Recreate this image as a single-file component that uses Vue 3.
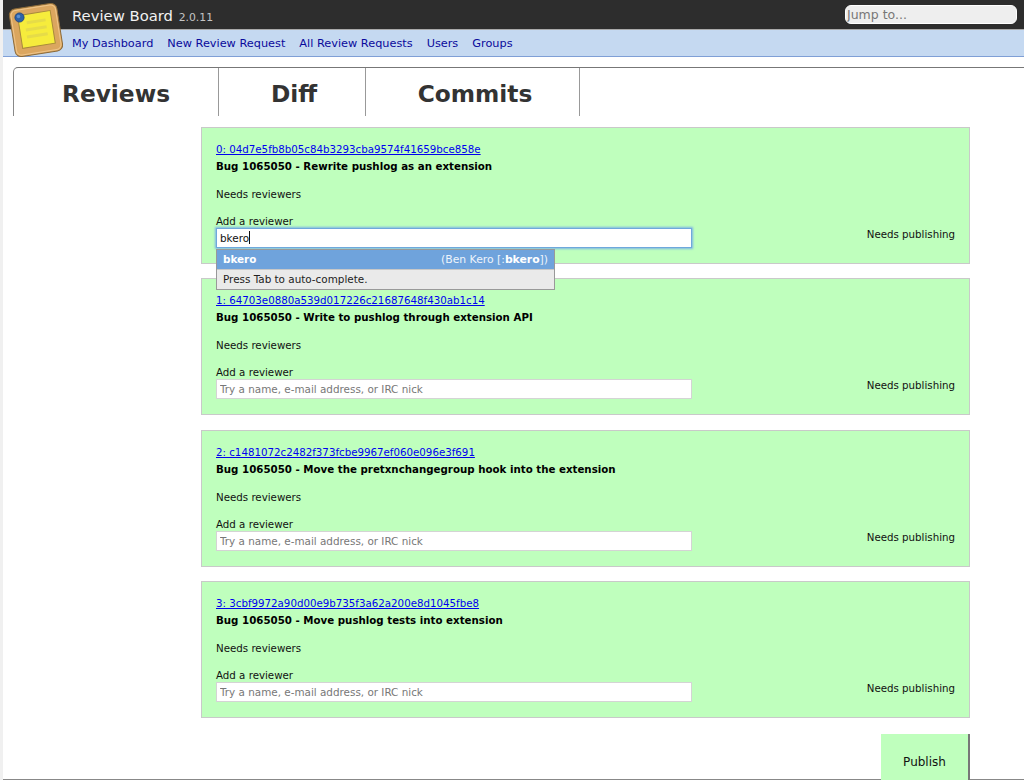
<script setup>
const commits = [
  { id: 0, hash: '04d7e5fb8b05c84b3293cba9574f41659bce858e', title: 'Bug 1065050 - Rewrite pushlog as an extension', active: true },
  { id: 1, hash: '64703e0880a539d017226c21687648f430ab1c14', title: 'Bug 1065050 - Write to pushlog through extension API' },
  { id: 2, hash: 'c1481072c2482f373fcbe9967ef060e096e3f691', title: 'Bug 1065050 - Move the pretxnchangegroup hook into the extension' },
  { id: 3, hash: '3cbf9972a90d00e9b735f3a62a200e8d1045fbe8', title: 'Bug 1065050 - Move pushlog tests into extension' }
]
const navLinks = ['My Dashboard', 'New Review Request', 'All Review Requests', 'Users', 'Groups']
const tabs = [
  { label: 'Reviews', cls: 'tab-reviews' },
  { label: 'Diff', cls: 'tab-diff' },
  { label: 'Commits', cls: 'tab-commits' }
]
</script>

<template>
  <div class="page">
    <header class="topbar">
      <div class="brand">Review Board <span class="version">2.0.11</span></div>
      <input class="jump" placeholder="Jump to..." />
    </header>
    <nav class="navbar">
      <a v-for="l in navLinks" :key="l" href="#" class="navlink">{{ l }}</a>
    </nav>
    <svg class="logo" width="58" height="58" viewBox="0 0 58 58">
      <g transform="rotate(-9 29 29)">
        <rect x="5" y="5" width="48" height="48" rx="6" fill="#dba65f" stroke="#8a6a3a" stroke-width="1" />
        <rect x="6.5" y="6.5" width="45" height="45" rx="5" fill="none" stroke="#eec48a" stroke-width="1" />
        <rect x="13" y="12" width="33" height="33" fill="#f6ec3c" stroke="#a88a3c" stroke-width="1" />
        <rect x="21" y="19" width="19" height="3" fill="#e6dc48" />
        <rect x="19" y="26" width="21" height="3" fill="#e6dc48" />
        <rect x="19" y="33" width="21" height="3" fill="#e6dc48" />
      </g>
      <circle cx="12.5" cy="16.5" r="4.6" fill="#2d62a8" stroke="#1d3f78" stroke-width="0.8" />
      <circle cx="11.5" cy="15.5" r="1.8" fill="#5b8fd0" />
    </svg>

    <main class="content">
      <div class="tabs">
        <div v-for="t in tabs" :key="t.label" class="tab" :class="t.cls">{{ t.label }}</div>
      </div>

      <section class="list">
        <article v-for="c in commits" :key="c.id" class="card">
          <div class="card-main">
            <a href="#" class="hash">{{ c.id }}: {{ c.hash }}</a>
            <div class="title">{{ c.title }}</div>
            <div class="needs">Needs reviewers</div>
            <div class="add">Add a reviewer</div>
            <div v-if="c.active" class="field field-active">bkero<span class="caret"></span></div>
            <input v-else class="field" placeholder="Try a name, e-mail address, or IRC nick" />
            <div v-if="c.active" class="dropdown">
              <div class="opt-row"><b>bkero</b><span class="opt-name">(Ben Kero [:<b>bkero</b>])</span></div>
              <div class="hint-row">Press Tab to auto-complete.</div>
            </div>
          </div>
          <div class="status">Needs publishing</div>
        </article>
      </section>

      <div class="actions">
        <button class="publish">Publish</button>
      </div>
    </main>
  </div>
</template>

<style>
html, body { margin: 0; background: #fff; overflow: hidden; }
</style>

<style scoped>
.page {
  position: relative;
  width: 1024px;
  height: 780px;
  overflow: hidden;
  box-sizing: border-box;
  padding-left: 3px;
  background: #f0f0f0;
  font-family: "DejaVu Sans", Verdana, sans-serif;
  font-size: 10.25px;
  color: #111;
}
.topbar {
  height: 29px;
  box-sizing: border-box;
  background: #2d2d2d;
  display: flex;
  justify-content: space-between;
  align-items: flex-start;
  padding: 5px 7px 0 69px;
}
.brand {
  color: #f2f2f2;
  font-size: 14.8px;
  line-height: 21px;
}
.version { color: #c4c4c4; font-size: 10.8px; margin-left: 1px; }
.jump {
  width: 172px;
  height: 19px;
  box-sizing: border-box;
  border: 1px solid #fff;
  border-radius: 6px;
  background: #eee;
  padding: 0 1px;
  font: 12.5px "DejaVu Sans", sans-serif;
  outline: none;
}
.jump::placeholder { color: #777; opacity: 1; }
.navbar {
  height: 28px;
  box-sizing: border-box;
  background: #c5d9f1;
  border-top: 1px solid #a9a9a9;
  border-bottom: 1px solid #7f9fd6;
  display: flex;
  gap: 14px;
  align-items: center;
  padding-left: 69px;
}
.navlink { color: #0a0a9c; text-decoration: none; font-size: 11.3px; }
.logo { position: absolute; left: 7px; top: 1px; }
.content {
  height: 723px;
  box-sizing: border-box;
  background: #fff;
  padding: 10px 0 0 10px;
  border-bottom: 1px solid #888;
}
.tabs {
  display: flex;
  height: 49px;
  border-top: 1px solid #777;
  border-left: 1px solid #888;
  border-top-left-radius: 5px;
  box-sizing: border-box;
}
.tab {
  display: flex;
  align-items: center;
  justify-content: center;
  box-sizing: border-box;
  border-right: 1px solid #999;
  color: #333;
  font-size: 23.3px;
  font-weight: bold;
  padding-top: 3px;
}
.tab-reviews { width: 205px; }
.tab-diff { width: 147px; padding-left: 4px; }
.tab-commits { width: 214px; padding-left: 5px; }
.list {
  margin: 10.5px 0 0 188px;
  width: 769px;
  display: flex;
  flex-direction: column;
  gap: 14.5px;
}
.card {
  position: relative;
  height: 137px;
  box-sizing: border-box;
  background: #bfffbd;
  border: 1px solid #c9c9c9;
  padding: 14px 14px 0 14px;
  display: flex;
  justify-content: space-between;
  line-height: 14px;
}
.card-main { display: flex; flex-direction: column; align-items: flex-start; width: 476px; }
.hash { color: #0000ee; text-decoration: underline; }
.title { font-weight: bold; margin-top: 3px; color: #000; }
.needs { margin-top: 14px; }
.add { margin-top: 13px; }
.field {
  width: 476px;
  height: 20px;
  box-sizing: border-box;
  margin-top: 0;
  border: 1px solid #d4d4d4;
  background: #fff;
  padding: 0 3px;
  font: 10.4px/18px "DejaVu Sans", sans-serif;
  color: #111;
  outline: none;
}
.field::placeholder { color: #777; opacity: 1; }
.field-active {
  border: 1px solid #6fa8dc;
  box-shadow: 0 0 2px 1px #7db4e6;
}
.caret {
  display: inline-block;
  width: 1px;
  height: 13px;
  background: #111;
  vertical-align: -2px;
}
.dropdown {
  position: absolute;
  left: 14px;
  top: 121px;
  width: 339px;
  box-sizing: border-box;
  border: 1px solid #999;
  background: #eaeaea;
  z-index: 2;
  line-height: 19px;
  font-size: 10.4px;
}
.opt-row {
  display: flex;
  justify-content: space-between;
  height: 19px;
  padding: 0 6px;
  background: #6fa3dc;
  color: #eef4fb;
}
.opt-row b { color: #fff; }
.opt-name { font-size: 10.8px; }
.hint-row {
  height: 20px;
  padding: 0 6px;
  border-top: 1px solid #c8c8c8;
  box-sizing: border-box;
  color: #222;
}
.status { align-self: flex-start; margin-top: 85px; color: #111; }
.actions {
  width: 769px;
  margin: 16px 0 0 188px;
  display: flex;
  justify-content: flex-end;
}
.publish {
  width: 89px;
  height: 46px;
  box-sizing: border-box;
  border: none;
  border-right: 2px solid #777;
  background: #bfffbd;
  font: 12px "DejaVu Sans", sans-serif;
  color: #111;
  padding: 10px 0 0 0;
}
</style>
